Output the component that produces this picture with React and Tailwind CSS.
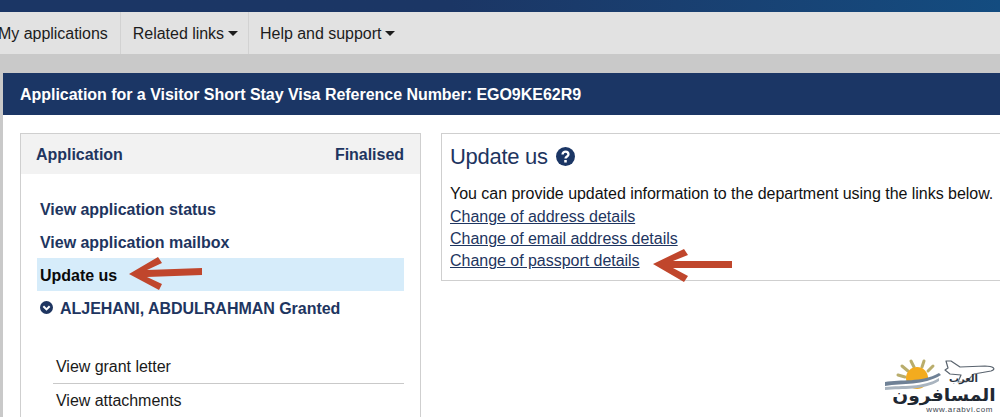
import React from "react";

function Arrow({ className, width, height, d }) {
  return (
    <svg className={className} width={width} height={height} viewBox={`0 0 ${width} ${height}`}>
      <path d={d} fill="#c0462c" />
    </svg>
  );
}

function Watermark() {
  return (
    <div className="absolute left-[885px] top-[358px] w-[112px] h-[56px]">
      <svg className="absolute left-0 top-0" width="112" height="40" viewBox="0 0 112 40">
        <g stroke="#b9ad6c" strokeWidth="3" strokeLinecap="round">
          <path d="M23 13 L17 8" />
          <path d="M29 9 L26 3" />
          <path d="M37 9 L39 3" />
          <path d="M43 13 L48 8" />
          <path d="M20 19 L13 17" />
        </g>
        <circle cx="32" cy="20" r="11" fill="#f3ab1e" />
        <path d="M0 25 C16 22 36 27 55 16 L58 18 C42 31 20 28 0 31 Z" fill="#fff" />
        <path d="M0 24 C16 21 36 25 54 15 L56 17 C38 28 18 25 0 28 Z" fill="#6f8196" />
        <path d="M0 29 C18 27 38 30 54 20 L54 23 C38 33 18 30 0 32 Z" fill="#a9b4bf" />
        <path d="M61 3 L66 3 L75 9 L100 8 C108 8 112 11 106 13 L89 16 L81 24 L73 24 L76 17 L65 16 L60 12 L63 10 Z" fill="#fff" stroke="#59636e" strokeWidth="1.2" strokeLinejoin="round" />
      </svg>
      <span className="absolute right-[19px] top-[16px] h-[10px] font-['DejaVu_Sans',sans-serif] text-[10px] leading-[10px] font-bold text-[#29323d] [text-shadow:0_0_2px_#fff]">العرب</span>
      <span className="absolute left-[8px] right-[2px] top-[29px] h-[17px] text-center font-['DejaVu_Sans',sans-serif] text-[17px] leading-[17px] font-bold text-[#1f2832] whitespace-nowrap scale-x-[1.1] [text-shadow:0_0_2px_#fff,0_0_2px_#fff]">المسافرون</span>
      <span className="absolute right-[4px] top-[48px] font-['Liberation_Sans',sans-serif] text-[8px] leading-[7px] tracking-[0.6px] text-[#3e4650] whitespace-nowrap">www.arabvi.com</span>
    </div>
  );
}

export default function App() {
  return (
    <div className="relative w-[1000px] h-[417px] overflow-hidden bg-white font-['Liberation_Sans',sans-serif] tracking-[-0.03px]">
      <div className="h-[12px] bg-gradient-to-r from-[#1b3665] from-45% to-[#134c80]" />
      <nav className="flex h-[42px] bg-[#e2e2e2] text-[16px] text-[#1c1c1c]">
        <div className="flex items-center pt-[1px] pr-[12px] -ml-[2px] border-r border-[#d2d2d2]">My applications</div>
        <div className="flex items-center gap-[4px] pt-[1px] pl-[12px] pr-[10px] border-r border-[#d2d2d2]">
          Related links
          <span className="w-0 h-0 border-x-[5px] border-x-transparent border-t-[5px] border-t-[#1c1c1c]" />
        </div>
        <div className="flex items-center gap-[4px] pt-[1px] pl-[11px]">
          Help and support
          <span className="w-0 h-0 border-x-[5px] border-x-transparent border-t-[5px] border-t-[#1c1c1c]" />
        </div>
      </nav>
      <div className="h-[19px] bg-[#c9c9c9]" />
      <div className="flex h-[344px]">
        <div className="w-[3px] bg-[#c9c9c9]" />
        <main className="flex-1">
          <div className="flex items-center h-[42px] pt-[1px] pl-[17px] bg-[#1b3665] text-white text-[16px] font-bold">
            Application for a Visitor Short Stay Visa Reference Number: EGO9KE62R9
          </div>
          <div className="flex items-start gap-[20px] pl-[17px] pt-[18px]">
            <section className="w-[401px] h-[300px] shrink-0 border border-[#cfcfcf] border-b-0">
              <div className="flex items-center justify-between h-[40px] pt-[1px] pl-[15px] pr-[16px] bg-[#f2f2f2] text-[16px] font-bold text-[#1e3560]">
                <span>Application</span>
                <span>Finalised</span>
              </div>
              <div className="pt-[18px] pl-[16px] pr-[16px] text-[16px] font-bold text-[#1e3560]">
                <div className="h-[33px] pt-[2px] pl-[3px] flex items-center">View application status</div>
                <div className="h-[33px] pt-[2px] pl-[3px] flex items-center">View application mailbox</div>
                <div className="h-[33px] pt-[2px] pl-[3px] flex items-center bg-[#d6ecfa] text-[#0a0a0a]">Update us</div>
                <div className="h-[33px] pl-[3px] flex items-center gap-[7px]">
                  <svg width="13" height="13" viewBox="0 0 14 14">
                    <circle cx="7" cy="7" r="7" fill="#1e3560" />
                    <path d="M3.6 5.6 L7 9 L10.4 5.6" fill="none" stroke="#fff" strokeWidth="2.2" />
                  </svg>
                  <span className="pt-[2px]">ALJEHANI, ABDULRAHMAN Granted</span>
                </div>
                <div className="mt-[26px] ml-[16px] font-normal text-[#1a1a1a]">
                  <div className="h-[34px] pt-[1px] pl-[3px] flex items-center border-b border-[#c9c9c9]">View grant letter</div>
                  <div className="h-[34px] pl-[3px] flex items-center">View attachments</div>
                </div>
              </div>
            </section>
            <section className="flex-1 h-[148px] border border-[#cfcfcf] border-r-0 pl-[8px] pt-[6px] text-[16px]">
              <h1 className="flex items-center gap-[8px] h-[32px] text-[22px] tracking-[-0.3px] font-normal text-[#1e3560]">
                Update us
                <svg width="19" height="19" viewBox="0 0 18 18">
                  <circle cx="9" cy="9" r="9" fill="#1b3665" />
                  <path d="M6.2 7 C6.2 3.6 11.8 3.6 11.8 7 C11.8 9 9 9 9 11" fill="none" stroke="#fff" strokeWidth="2.2" />
                  <rect x="7.8" y="12.3" width="2.4" height="2.4" fill="#fff" />
                </svg>
              </h1>
              <p className="mt-[11px] leading-[22px] text-[#111] whitespace-nowrap">You can provide updated information to the department using the links below.</p>
              <div className="mt-[1px] flex flex-col items-start leading-[22px] text-[#1e3560]">
                <a className="underline">Change of address details</a>
                <a className="underline">Change of email address details</a>
                <a className="underline">Change of passport details</a>
              </div>
            </section>
          </div>
        </main>
      </div>
      <Arrow
        className="absolute left-[129px] top-[257px]"
        width="73"
        height="33"
        d="M0 17 L29 0 L33 6 L18 13 L73 11 L73 18 L18 20 L33 27 L30 33 Z"
      />
      <Arrow
        className="absolute left-[653px] top-[249px]"
        width="79"
        height="33"
        d="M0 15 L31 0 L35 6 L20 12 L79 12 L79 19 L20 19 L35 27 L31 33 Z"
      />
      <Watermark />
    </div>
  );
}
